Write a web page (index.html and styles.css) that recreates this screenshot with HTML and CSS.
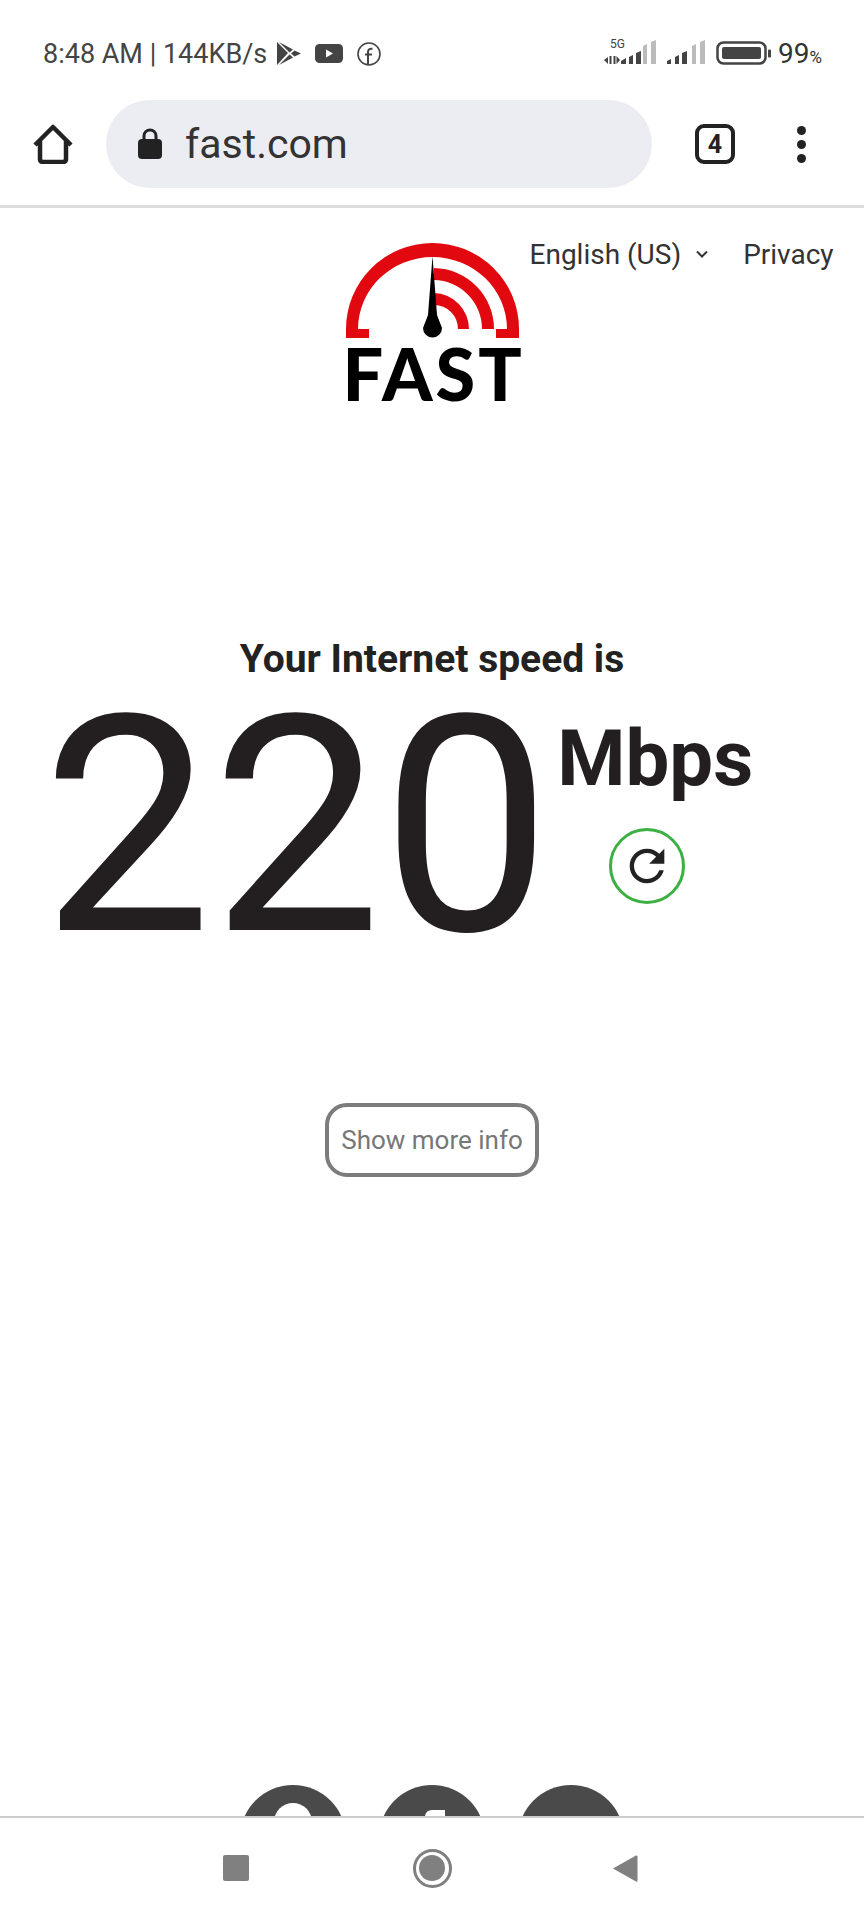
FILE: index.html
```html
<!DOCTYPE html>
<html>
<head>
<meta charset="UTF-8">
<title>fast.com</title>
<link rel="stylesheet" href="styles.css">
</head>
<body>

	<!-- phone status bar -->
	<div class="status">
		<span class="status_text">8:48 AM | 144KB/s</span>
		<svg class="ic_play" width="24" height="23" viewBox="0 0 24 23">
			<path d="M0 0 L11 11 L0 23 Z" fill="#444"/>
			<path d="M2 0 L16 7.5 L12.5 10.5 Z M12.5 12.5 L16 15.5 L2 23 Z M17.5 8.5 L24 11.5 L17.5 14.5 L14 11.5 Z" fill="#444"/>
		</svg>
		<svg class="ic_yt" width="28" height="19" viewBox="0 0 28 19">
			<rect width="28" height="19" rx="4.5" fill="#444"/>
			<path d="M11 5.5 L18 9.5 L11 13.5 Z" fill="#fff"/>
		</svg>
		<svg class="ic_fb" width="24" height="24" viewBox="0 0 24 24">
			<circle cx="12" cy="12" r="11" fill="none" stroke="#444" stroke-width="1.6"/>
			<path d="M11 23 V10 C11 7.5 12.5 6.5 15.5 6.8 M8 12.5 H15" fill="none" stroke="#444" stroke-width="2"/>
		</svg>
		<div class="status_right">
			<div class="net">
				<span class="net_label">5G</span>
				<svg width="53" height="25" viewBox="0 0 53 25">
					<path d="M0 20 L4 17 V24 Z M5.5 16 H7.5 V24 H5.5 Z M9.500 16 H11.500 V24 H9.500 Z M12.500 16 L16 20 L12.500 24 Z" fill="#444"/>
					<path d="M17 21 L22 18 V24 H17 Z M25 17 L29 15 V24 H25 Z M32 13 L37 11 V24 H32 Z" fill="#444"/>
					<path d="M39 6 L43 4 V24 H39 Z M47 2 L52 0 V24 H47 Z" fill="#bbb"/>
				</svg>
			</div>
			<svg class="ic_signal" width="38" height="25" viewBox="0 0 38 25">
				<path d="M0 21 L4 19 V24 H0 Z M8 17 L12 15 V24 H8 Z M15 13 L20 11 V24 H15 Z" fill="#444"/>
				<path d="M25 6 L29 4 V24 H25 Z M33 2 L38 0 V24 H33 Z" fill="#bbb"/>
			</svg>
			<svg class="ic_batt" width="55" height="24" viewBox="0 0 55 24">
				<rect x="1.500" y="1.500" width="48" height="21" rx="6" fill="none" stroke="#444" stroke-width="2.500"/>
				<rect x="6" y="6" width="39" height="12" rx="2" fill="#444"/>
				<rect x="52" y="8.500" width="3" height="8" rx="1" fill="#444"/>
			</svg>
			<span class="batt_num">99<span class="batt_pct">%</span></span>
		</div>
	</div>

	<!-- browser toolbar -->
	<div class="toolbar">
		<svg class="ic_home" width="40" height="40" viewBox="0 0 40 40">
			<path d="M2 21 L20 3 L38 21 M7 17 V35 Q7 38 10 38 H30 Q33 38 33 35 V17" fill="none" stroke="#222" stroke-width="4.500" stroke-linejoin="round"/>
		</svg>
		<div class="url">
			<svg class="ic_lock" width="24" height="32" viewBox="0 0 24 32">
				<path d="M6 13 V8 C6 0 18 0 18 8 V13" fill="none" stroke="#222" stroke-width="3"/>
				<rect y="11" width="24" height="20" rx="4" fill="#222"/>
			</svg>
			<span class="url_text">fast.com</span>
		</div>
		<div class="tabs">4</div>
		<div class="dots"><i></i><i></i><i></i></div>
	</div>

	<!-- page content -->
	<div class="page">
		<div class="head">
			<div class="logo">
				<svg width="173" height="95" viewBox="0 0 173 95">
					<path d="M0 95 V86 A86.500 86 0 0 1 173 86 V95 H150 V86 H161 A74.500 72 0 0 0 12 86 H23 V95 Z" fill="#e2080f"/>
					<path d="M88 25 A61 61 0 0 1 148 86 H136 A49 49 0 0 0 88 37 Z" fill="#e2080f"/>
					<path d="M88 50 A36 36 0 0 1 123 86 H112 A24 24 0 0 0 88 62 Z" fill="#e2080f"/>
					<path d="M86.500 13 L91 72 L96 85 A9.500 9.500 0 1 1 77 85 L82 72 Z" fill="#000"/>
				</svg>
				<div class="logo_text">FAST</div>
			</div>
			<div class="links">
				<span class="lang">English (US)</span>
				<svg class="ic_chev" width="14" height="9" viewBox="0 0 14 9">
					<path d="M2 1.500 L7 6.500 L12 1.500" fill="none" stroke="#333" stroke-width="2"/>
				</svg>
				<span class="privacy">Privacy</span>
			</div>
		</div>

		<div class="speed_title">Your Internet speed is</div>
		<div class="speed">
			<div class="speed_num">220</div>
			<div class="speed_side">
				<div class="speed_unit">Mbps</div>
				<div class="reload">
					<svg width="52" height="52" viewBox="0 0 24 24">
						<path d="M17.65 6.35C16.2 4.9 14.21 4 12 4c-4.42 0-7.99 3.58-7.99 8s3.57 8 7.99 8c3.73 0 6.84-2.55 7.73-6h-2.08c-.82 2.33-3.04 4-5.65 4-3.31 0-6-2.69-6-6s2.69-6 6-6c1.66 0 3.14.69 4.22 1.78L13 11h7V4l-2.35 2.35z" fill="#222"/>
					</svg>
				</div>
			</div>
		</div>

		<div class="more_wrap"><div class="more">Show more info</div></div>

		<div class="social">
			<div class="social_btn"><span class="social_ring"></span></div>
			<div class="social_btn">
				<svg class="social_f" width="40" height="31" viewBox="0 0 40 31">
					<path d="M13 31 V6 Q14 0 20 0 H33 V31 Z" fill="#fff"/>
				</svg>
			</div>
			<div class="social_btn"></div>
		</div>
	</div>

	<!-- android nav -->
	<div class="nav">
		<div class="nav_square"></div>
		<div class="nav_home"><i></i></div>
		<svg width="26" height="29" viewBox="0 0 26 29">
			<path d="M1 14.500 L24 1.500 Q25.500 1 25.500 2.500 V26.500 Q25.500 28 24 27.500 Z" fill="#808080"/>
		</svg>
	</div>

</body>
</html>
```

FILE: styles.css
```css
* {
	box-sizing: border-box;
}

html, body {
	margin: 0;
	padding: 0;
}

body {
	width: 864px;
	height: 1920px;
	display: flex;
	flex-direction: column;
	overflow: hidden;
	background: #fff;
	font-family: Roboto, "Liberation Sans", sans-serif;
	color: #222;
}

/* status bar */
.status {
	height: 100px;
	flex: none;
	display: flex;
	align-items: center;
	padding: 7px 42px 0 43px;
}

.status_text {
	font-size: 27px;
	color: #444;
	white-space: nowrap;
}

.ic_play {
	margin-left: 10px;
}

.ic_yt {
	margin-left: 14px;
}

.ic_fb {
	margin-left: 14px;
}

.status_right {
	margin-left: auto;
	margin-top: -3px;
	display: flex;
	align-items: flex-end;
}

.net {
	position: relative;
	display: flex;
}

.net_label {
	position: absolute;
	left: 6px;
	top: -3px;
	font-size: 12px;
	color: #444;
}

.ic_signal {
	margin-left: 10px;
}

.ic_batt {
	margin-left: 11px;
}

.batt_num {
	margin-left: 7px;
	margin-bottom: -5px;
	font-size: 28px;
	line-height: 25px;
	color: #333;
}

.batt_pct {
	font-size: 17px;
}

/* toolbar */
.toolbar {
	height: 108px;
	flex: none;
	display: flex;
	align-items: center;
	padding: 0 0 17px 33px;
	border-bottom: 3px solid #ddd;
}

.url {
	margin-left: 33px;
	width: 546px;
	height: 88px;
	border-radius: 44px;
	background: #ecedf3;
	display: flex;
	align-items: center;
	padding-left: 32px;
}

.url_text {
	margin-left: 23px;
	font-size: 41px;
	color: #333;
}

.tabs {
	margin-left: 43px;
	width: 40px;
	height: 40px;
	border: 4.5px solid #222;
	border-radius: 9px;
	display: flex;
	align-items: center;
	justify-content: center;
	font-size: 25px;
	font-weight: 700;
}

.dots {
	margin-left: 62px;
	display: flex;
	flex-direction: column;
	gap: 5px;
}

.dots i {
	display: block;
	width: 9px;
	height: 9px;
	border-radius: 50%;
	background: #222;
}

/* page */
.page {
	flex: 1;
	min-height: 0;
	display: flex;
	flex-direction: column;
	overflow: hidden;
}

.head {
	display: grid;
	grid-template-columns: 1fr 173px 1fr;
	padding: 35px 0 0 0;
}

.logo {
	grid-column: 2;
}

.logo svg {
	display: block;
}

.logo_text {
	margin-top: 4px;
	margin-left: -3px;
	font-family: Lato, sans-serif;
	font-weight: 900;
	font-size: 72px;
	line-height: 62px;
	letter-spacing: 3px;
	color: #000;
	text-align: center;
	white-space: nowrap;
}

.links {
	grid-column: 3;
	display: flex;
	align-items: center;
	align-self: start;
	margin-top: -5px;
	padding-left: 11px;
	font-size: 28px;
	color: #333;
	white-space: nowrap;
}

.ic_chev {
	margin-left: 14px;
}

.privacy {
	margin-left: 34px;
}

.speed_title {
	margin-top: 233px;
	font-size: 39px;
	font-weight: 700;
	line-height: 44px;
	text-align: center;
}

.speed {
	display: flex;
	padding-left: 42px;
	color: #231f20;
}

.speed_num {
	font-size: 302px;
	line-height: 292px;
}

.speed_side {
	margin-left: 6px;
	padding-top: 33px;
}

.speed_unit {
	font-size: 78px;
	font-weight: 700;
	line-height: 90px;
}

.reload {
	margin: 24px 0 0 52px;
	width: 76px;
	height: 76px;
	border: 3px solid #3cb043;
	border-radius: 50%;
	display: flex;
	align-items: center;
	justify-content: center;
}

.more_wrap {
	margin-top: 130px;
	display: flex;
	justify-content: center;
}

.more {
	width: 214px;
	height: 74px;
	border: 4px solid #7c7c7c;
	border-radius: 22px;
	display: flex;
	align-items: center;
	justify-content: center;
	font-size: 26px;
	color: #777;
	white-space: nowrap;
}

.social {
	margin-top: auto;
	height: 31px;
	display: flex;
	justify-content: center;
	gap: 33px;
	overflow: hidden;
}

.social_btn {
	width: 106px;
	height: 106px;
	flex: none;
	border-radius: 50%;
	background: #4a4a4a;
	display: flex;
	justify-content: center;
}

.social_ring {
	margin-top: 18px;
	width: 38px;
	height: 38px;
	border-radius: 50%;
	background: #fff;
}

.social_f {
	margin-top: 25px;
}

/* android nav */
.nav {
	height: 104px;
	flex: none;
	border-top: 2px solid #ccc;
	display: flex;
	align-items: center;
	padding: 0 226px 2px 223px;
	justify-content: space-between;
}

.nav_square {
	width: 26px;
	height: 26px;
	border-radius: 2px;
	background: #808080;
}

.nav_home {
	width: 39px;
	height: 39px;
	margin-left: 3px;
	border: 3px solid #808080;
	border-radius: 50%;
	display: flex;
	align-items: center;
	justify-content: center;
}

.nav_home i {
	display: block;
	width: 26px;
	height: 26px;
	border-radius: 50%;
	background: #808080;
}
```
